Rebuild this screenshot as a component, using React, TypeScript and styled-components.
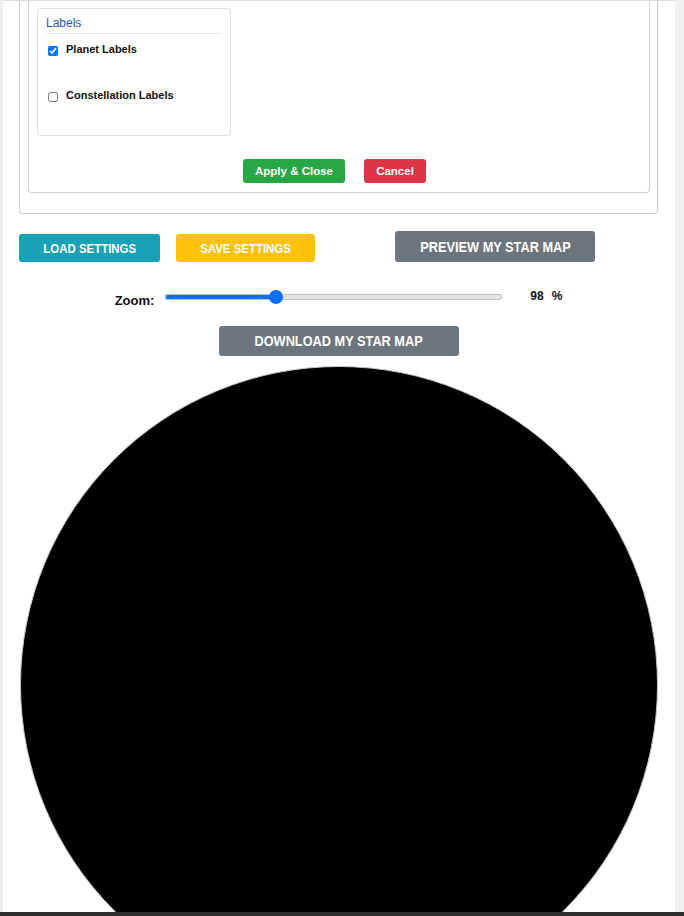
import React, { useState } from "react";
import styled, { createGlobalStyle } from "styled-components";

const GlobalStyle = createGlobalStyle`
  html, body { margin: 0; padding: 0; }
  body {
    background: #f0f0f0;
    font-family: "Liberation Sans", Arial, sans-serif;
    overflow: hidden;
  }
  * { box-sizing: border-box; }
`;

const Page = styled.div`
  display: flex;
  flex-direction: column;
  width: 684px;
  height: 916px;
`;

const Sheet = styled.main`
  flex: 1;
  min-height: 0;
  margin: 0 9px 0 3px;
  padding: 0 17px 0 16px;
  background: #fff;
  border-top: 1px solid #dcdcdc;
  overflow: hidden;
`;

const BottomBar = styled.div`
  height: 4px;
  background: #2e2e2e;
  flex-shrink: 0;
`;

const OuterCard = styled.section`
  border: 1px solid #cacaca;
  border-top: none;
  border-radius: 0 0 4px 4px;
  padding: 0 7px 20px 8px;
`;

const InnerCard = styled.div`
  border: 1px solid #cfcfcf;
  border-top: none;
  border-radius: 0 0 4px 4px;
  padding: 7px 8px 9px;
`;

const OptionBox = styled.fieldset`
  width: 194px;
  margin: 0;
  border: 1px solid #dedede;
  border-radius: 4px;
  padding: 6px 8px 0;
`;

const OptionTitle = styled.legend`
  display: block;
  float: left;
  width: 100%;
  padding: 0 0 2px;
  font-size: 12px;
  line-height: 16px;
  color: #1657b8;
  border-bottom: 1px solid #e8e8e8;
`;

const OptionList = styled.div`
  clear: both;
  padding-top: 9px;
`;

const OptionRow = styled.label`
  display: flex;
  align-items: flex-start;
  height: 46px;
  font-size: 11px;
  font-weight: bold;
  line-height: 12px;
  color: #111;
  cursor: pointer;
`;

const Check = styled.input`
  width: 10px;
  height: 10px;
  margin: 3px 8px 0 2px;
  flex-shrink: 0;
`;

const DialogFooter = styled.div`
  display: flex;
  justify-content: center;
  gap: 19px;
  margin-top: 23px;
  padding-right: 9px;
`;

const tones: Record<string, string> = {
  green: "#28a745",
  red: "#dc3545",
  teal: "#17a2b8",
  yellow: "#ffc107",
  gray: "#6c757d",
};

const SmallButton = styled.button<{ $tone: string; $w: number }>`
  width: ${(p) => p.$w}px;
  height: 24px;
  padding: 0;
  border: none;
  border-radius: 3px;
  background: ${(p) => tones[p.$tone]};
  color: #fff;
  font-family: "Liberation Sans", Arial, sans-serif;
  font-weight: bold;
  font-size: 11.5px;
  cursor: pointer;
`;

const BigButton = styled.button<{ $tone: string; $w: number; $h: number; $fs: number }>`
  display: flex;
  align-items: center;
  justify-content: center;
  width: ${(p) => p.$w}px;
  height: ${(p) => p.$h}px;
  padding: 0;
  border: none;
  border-radius: 3px;
  background: ${(p) => tones[p.$tone]};
  color: #fff;
  font-family: "Liberation Sans", Arial, sans-serif;
  font-weight: bold;
  font-size: ${(p) => p.$fs}px;
  text-transform: uppercase;
  white-space: nowrap;
  cursor: pointer;
`;

/* condensed caption: the original uses a narrow bold face */
const Condensed = styled.span`
  display: inline-block;
  transform: scaleX(0.88);
  transform-origin: center;
`;

const ActionRow = styled.div`
  display: grid;
  grid-template-columns: 1fr 1fr;
  align-items: end;
  margin-top: 17px;
`;

const ActionGroup = styled.div<{ $center?: boolean }>`
  display: flex;
  gap: 16px;
  justify-content: ${(p) => (p.$center ? "center" : "flex-start")};
  padding-right: ${(p) => (p.$center ? "6px" : "0")};
`;

const ZoomRow = styled.div`
  display: flex;
  justify-content: center;
  align-items: center;
  height: 18px;
  margin-top: 26px;
  font-weight: bold;
  color: #111;
`;

const ZoomLabel = styled.span`
  align-self: flex-end;
  font-size: 13px;
  line-height: 15px;
  margin: 0 11px -2px 0;
`;

const ZoomValue = styled.span<{ $gap: number }>`
  align-self: flex-start;
  font-size: 12px;
  line-height: 14px;
  margin-top: 1px;
  margin-left: ${(p) => p.$gap}px;
`;

const Range = styled.input<{ $fill: number }>`
  -webkit-appearance: none;
  appearance: none;
  width: 337px;
  height: 16px;
  margin: 0;
  background: transparent;

  &::-webkit-slider-runnable-track {
    height: 6px;
    border-radius: 3px;
    background: linear-gradient(
      to right,
      #0b6ff7 0%,
      #0b6ff7 ${(p) => p.$fill}%,
      #e4e4e4 ${(p) => p.$fill}%,
      #e4e4e4 100%
    );
    box-shadow: inset 0 0 0 1px #c4c4c4;
  }
  &::-webkit-slider-thumb {
    -webkit-appearance: none;
    width: 14px;
    height: 14px;
    margin-top: -4px;
    border-radius: 50%;
    background: #0b6ff7;
    border: none;
  }
`;

const CenterRow = styled.div`
  display: flex;
  justify-content: center;
  margin-top: 20px;
`;

const StarMap = styled.div`
  width: 638px;
  height: 638px;
  margin: 10px 0 0 1px;
  border-radius: 50%;
  background: #000;
  border: 1px solid #c4c4c4;
`;

export default function App() {
  const [planets, setPlanets] = useState(true);
  const [constellations, setConstellations] = useState(false);
  const [zoom, setZoom] = useState(98);
  const min = 50;
  const max = 200;
  const f = (zoom - min) / (max - min);
  const fill = ((7 + f * 323) / 337) * 100;

  return (
    <Page>
      <GlobalStyle />
      <Sheet>
        <OuterCard>
          <InnerCard>
            <OptionBox>
              <OptionTitle>Labels</OptionTitle>
              <OptionList>
                <OptionRow>
                  <Check
                    type="checkbox"
                    checked={planets}
                    onChange={(e) => setPlanets(e.target.checked)}
                  />
                  Planet Labels
                </OptionRow>
                <OptionRow>
                  <Check
                    type="checkbox"
                    checked={constellations}
                    onChange={(e) => setConstellations(e.target.checked)}
                  />
                  Constellation Labels
                </OptionRow>
              </OptionList>
            </OptionBox>
            <DialogFooter>
              <SmallButton $tone="green" $w={102}>Apply &amp; Close</SmallButton>
              <SmallButton $tone="red" $w={62}>Cancel</SmallButton>
            </DialogFooter>
          </InnerCard>
        </OuterCard>

        <ActionRow>
          <ActionGroup>
            <BigButton $tone="teal" $w={141} $h={28} $fs={13}>
              <Condensed>Load Settings</Condensed>
            </BigButton>
            <BigButton $tone="yellow" $w={139} $h={28} $fs={13}>
              <Condensed>Save Settings</Condensed>
            </BigButton>
          </ActionGroup>
          <ActionGroup $center>
            <BigButton $tone="gray" $w={200} $h={31} $fs={14.5}>
              <Condensed>Preview My Star Map</Condensed>
            </BigButton>
          </ActionGroup>
        </ActionRow>

        <ZoomRow>
          <ZoomLabel>Zoom:</ZoomLabel>
          <Range
            type="range"
            min={min}
            max={max}
            value={zoom}
            $fill={fill}
            onChange={(e) => setZoom(Number(e.target.value))}
          />
          <ZoomValue $gap={28}>{zoom}</ZoomValue>
          <ZoomValue $gap={8}>%</ZoomValue>
        </ZoomRow>

        <CenterRow>
          <BigButton $tone="gray" $w={240} $h={30} $fs={14.5}>
            <Condensed>Download My Star Map</Condensed>
          </BigButton>
        </CenterRow>

        <StarMap />
      </Sheet>
      <BottomBar />
    </Page>
  );
}
